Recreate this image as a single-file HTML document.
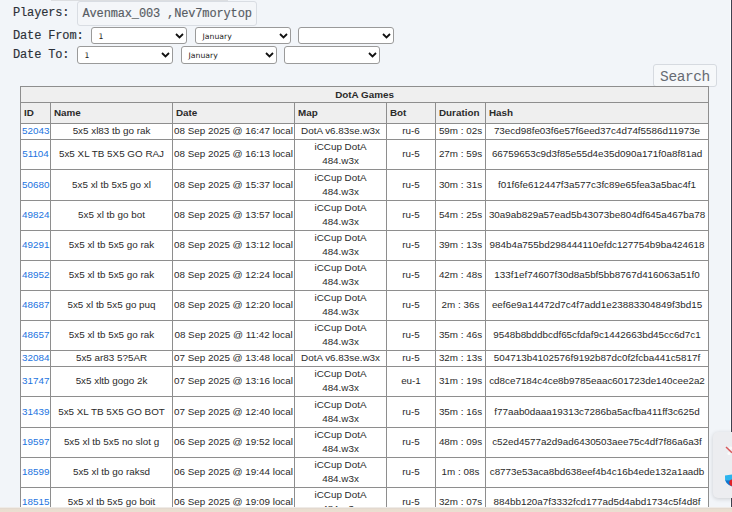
<!DOCTYPE html>
<html><head><meta charset="utf-8"><title>DotA Games</title>
<style>
html,body{margin:0;padding:0;}
body{width:732px;height:512px;overflow:hidden;background:#f2f5f9;position:relative;font-family:"Liberation Mono",monospace;color:#2a2f36;}
.lbl{position:absolute;left:13px;font-size:12px;line-height:14px;letter-spacing:-0.15px;white-space:pre;color:#2b3038;-webkit-text-stroke:0.15px #2b3038;}
.inp{position:absolute;left:77px;top:1px;width:173px;height:23px;border:1px solid #d9dde3;border-radius:3px;background:#f4f6f9;font-size:12px;line-height:24.5px;color:#575c63;-webkit-text-stroke:0.15px #575c63;padding-left:4.5px;box-sizing:content-box;white-space:pre;letter-spacing:-0.15px}
.sel{position:absolute;width:94px;height:15px;border:1px solid #9a9a9a;border-radius:3px;background:#fff;font-family:"DejaVu Sans",sans-serif;font-size:7.7px;line-height:16.4px;color:#222;}
.sel span{position:absolute;left:6.6px;top:0.7px}
.sel svg{position:absolute;right:1.6px;top:5px}
.btn{position:absolute;left:653px;top:64px;width:62px;height:21px;border:1px solid #d6dae0;border-radius:3px;background:#f6f8fa;font-size:14.5px;line-height:25px;text-align:center;color:#666b73;letter-spacing:-0.4px;overflow:hidden}
table{position:absolute;left:20px;top:86px;width:689px;border-collapse:collapse;table-layout:fixed;font-family:"Liberation Sans",sans-serif;font-size:9.85px;color:#2a2a2a;}
td,th{border:1px solid #8e8e8e;padding:0 1px 1px;text-align:center;white-space:nowrap;overflow:hidden;line-height:14px;background:#fff}
th{background:#efefef;text-align:left;padding-left:3px;font-weight:bold;}
tr.cap th{text-align:center;height:15px;line-height:15px;padding:0}
tr.hd th{height:19px;}
a{color:#1c74e0;text-decoration:none}
.bottom{position:absolute;left:0;top:507px;width:732px;height:5px;background:linear-gradient(to bottom,#efebe7 0,#efebe7 1px,#e3d9cf 1px,#e3d9cf 2px,#e9ddd0 2px,#eadfd1 5px)}
.side{position:absolute;left:730px;top:0;width:1px;height:507px;background:#fcfdfe;border-right:1px solid #3f4250}
.widget{position:absolute;left:713px;top:432px;width:30px;height:66px;border-radius:5px;background:#ecedf0;box-shadow:0 1px 4px rgba(0,0,0,0.16)}
.widget svg{position:absolute;left:0;top:0}
</style></head><body>
<div style="position:absolute;left:51px;top:0;width:177px;height:1px;background:#dcdee1"></div>
<div class="lbl" style="top:6.4px">Players:</div>
<div class="inp">Avenmax_003 ,Nev7morytop</div>
<div class="lbl" style="top:29px">Date From:</div>
<div class="sel" style="left:91px;top:27px"><span>1</span><svg width="9" height="6" viewBox="0 0 9 6"><path d="M1 1 L4.5 4.5 L8 1" fill="none" stroke="#111" stroke-width="1.8"/></svg></div>
<div class="sel" style="left:195px;top:27px"><span>January</span><svg width="9" height="6" viewBox="0 0 9 6"><path d="M1 1 L4.5 4.5 L8 1" fill="none" stroke="#111" stroke-width="1.8"/></svg></div>
<div class="sel" style="left:298px;top:27px"><span></span><svg width="9" height="6" viewBox="0 0 9 6"><path d="M1 1 L4.5 4.5 L8 1" fill="none" stroke="#111" stroke-width="1.8"/></svg></div>
<div class="lbl" style="top:48px">Date To:</div>
<div class="sel" style="left:77px;top:46px;height:16px"><span>1</span><svg width="9" height="6" viewBox="0 0 9 6"><path d="M1 1 L4.5 4.5 L8 1" fill="none" stroke="#111" stroke-width="1.8"/></svg></div>
<div class="sel" style="left:181px;top:46px;height:16px"><span>January</span><svg width="9" height="6" viewBox="0 0 9 6"><path d="M1 1 L4.5 4.5 L8 1" fill="none" stroke="#111" stroke-width="1.8"/></svg></div>
<div class="sel" style="left:284px;top:46px;height:16px"><span></span><svg width="9" height="6" viewBox="0 0 9 6"><path d="M1 1 L4.5 4.5 L8 1" fill="none" stroke="#111" stroke-width="1.8"/></svg></div>
<div class="btn">Search</div>
<table>
<colgroup><col style="width:30px"><col style="width:122px"><col style="width:122px"><col style="width:92px"><col style="width:49px"><col style="width:50px"><col style="width:223px"></colgroup>
<tr class="cap"><th colspan="7">DotA Games</th></tr>
<tr class="hd"><th>ID</th><th>Name</th><th>Date</th><th>Map</th><th>Bot</th><th>Duration</th><th>Hash</th></tr>
<tr class="r1" style="height:16px"><td class="id"><a href="#">52043</a></td><td>5x5 xl83 tb go rak</td><td>08 Sep 2025 @ 16:47 local</td><td>DotA v6.83se.w3x</td><td>ru-6</td><td>59m : 02s</td><td>73ecd98fe03f6e57f6eed37c4d74f5586d11973e</td></tr>
<tr class="r2" style="height:30px"><td class="id"><a href="#">51104</a></td><td>5x5 XL TB 5X5 GO RAJ</td><td>08 Sep 2025 @ 16:13 local</td><td>iCCup DotA<br>484.w3x</td><td>ru-5</td><td>27m : 59s</td><td>66759653c9d3f85e55d4e35d090a171f0a8f81ad</td></tr>
<tr class="r2" style="height:31px"><td class="id"><a href="#">50680</a></td><td>5x5 xl tb 5x5 go xl</td><td>08 Sep 2025 @ 15:37 local</td><td>iCCup DotA<br>484.w3x</td><td>ru-5</td><td>30m : 31s</td><td>f01f6fe612447f3a577c3fc89e65fea3a5bac4f1</td></tr>
<tr class="r2" style="height:30px"><td class="id"><a href="#">49824</a></td><td>5x5 xl tb go bot</td><td>08 Sep 2025 @ 13:57 local</td><td>iCCup DotA<br>484.w3x</td><td>ru-5</td><td>54m : 25s</td><td>30a9ab829a57ead5b43073be804df645a467ba78</td></tr>
<tr class="r2" style="height:30px"><td class="id"><a href="#">49291</a></td><td>5x5 xl tb 5x5 go rak</td><td>08 Sep 2025 @ 13:12 local</td><td>iCCup DotA<br>484.w3x</td><td>ru-5</td><td>39m : 13s</td><td>984b4a755bd298444110efdc127754b9ba424618</td></tr>
<tr class="r2" style="height:30px"><td class="id"><a href="#">48952</a></td><td>5x5 xl tb 5x5 go rak</td><td>08 Sep 2025 @ 12:24 local</td><td>iCCup DotA<br>484.w3x</td><td>ru-5</td><td>42m : 48s</td><td>133f1ef74607f30d8a5bf5bb8767d416063a51f0</td></tr>
<tr class="r2" style="height:30px"><td class="id"><a href="#">48687</a></td><td>5x5 xl tb 5x5 go puq</td><td>08 Sep 2025 @ 12:20 local</td><td>iCCup DotA<br>484.w3x</td><td>ru-5</td><td>2m : 36s</td><td>eef6e9a14472d7c4f7add1e23883304849f3bd15</td></tr>
<tr class="r2" style="height:30px"><td class="id"><a href="#">48657</a></td><td>5x5 xl tb 5x5 go rak</td><td>08 Sep 2025 @ 11:42 local</td><td>iCCup DotA<br>484.w3x</td><td>ru-5</td><td>35m : 46s</td><td>9548b8bddbcdf65cfdaf9c1442663bd45cc6d7c1</td></tr>
<tr class="r1" style="height:16px"><td class="id"><a href="#">32084</a></td><td>5x5 ar83 5?5AR</td><td>07 Sep 2025 @ 13:48 local</td><td>DotA v6.83se.w3x</td><td>ru-5</td><td>32m : 13s</td><td>504713b4102576f9192b87dc0f2fcba441c5817f</td></tr>
<tr class="r2" style="height:30px"><td class="id"><a href="#">31747</a></td><td>5x5 xltb gogo 2k</td><td>07 Sep 2025 @ 13:16 local</td><td>iCCup DotA<br>484.w3x</td><td>eu-1</td><td>31m : 19s</td><td>cd8ce7184c4ce8b9785eaac601723de140cee2a2</td></tr>
<tr class="r2" style="height:31px"><td class="id"><a href="#">31439</a></td><td>5x5 XL TB 5X5 GO BOT</td><td>07 Sep 2025 @ 12:40 local</td><td>iCCup DotA<br>484.w3x</td><td>ru-5</td><td>35m : 16s</td><td>f77aab0daaa19313c7286ba5acfba411ff3c625d</td></tr>
<tr class="r2" style="height:30px"><td class="id"><a href="#">19597</a></td><td>5x5 xl tb 5x5 no slot g</td><td>06 Sep 2025 @ 19:52 local</td><td>iCCup DotA<br>484.w3x</td><td>ru-5</td><td>48m : 09s</td><td>c52ed4577a2d9ad6430503aee75c4df7f86a6a3f</td></tr>
<tr class="r2" style="height:30px"><td class="id"><a href="#">18599</a></td><td>5x5 xl tb go raksd</td><td>06 Sep 2025 @ 19:44 local</td><td>iCCup DotA<br>484.w3x</td><td>ru-5</td><td>1m : 08s</td><td>c8773e53aca8bd638eef4b4c16b4ede132a1aadb</td></tr>
<tr class="r2" style="height:30px"><td class="id"><a href="#">18515</a></td><td>5x5 xl tb 5x5 go boit</td><td>06 Sep 2025 @ 19:09 local</td><td>iCCup DotA<br>484.w3x</td><td>ru-5</td><td>32m : 07s</td><td>884bb120a7f3332fcd177ad5d4abd1734c5f4d8f</td></tr>
</table>
<div class="side"></div>
<div class="widget"><svg width="20" height="66" viewBox="1 0 20 66"><circle cx="18.5" cy="16" r="1.6" fill="#fafafa"/><circle cx="17" cy="21.5" r="1.6" fill="#fafafa"/><path d="M14 15 L20 20.7" stroke="#d9585a" stroke-width="1.5" fill="none"/><path d="M13 43.6 L20 42.6 L20 49 L13.1 48.6 Z" fill="#2cb4ee"/><path d="M13.1 48.2 L20 48.2 L20 54.6 L16.8 53 Q14 51 13.1 48.2 Z" fill="#0b78d2"/><circle cx="20.5" cy="50.8" r="3.2" fill="#e02127"/></svg></div>
<div class="bottom"></div>
</body></html>
